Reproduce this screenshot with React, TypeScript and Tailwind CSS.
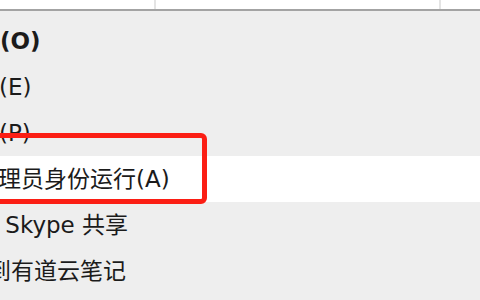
const rows = [
  { text: '打开(O)', offset: '-ml-[46px]', bold: true },
  { text: '编辑(E)', offset: '-ml-[47px]' },
  { text: '打印(P)', offset: '-ml-[47px]' },
  { text: '以管理员身份运行(A)', offset: '-ml-[48px]', active: true },
  { text: '通过 Skype 共享', offset: '-ml-[48px]' },
  { text: '上传到有道云笔记', offset: '-ml-[58px]' },
];

export default function App() {
  return (
    <div className="relative w-[480px] h-[300px] overflow-hidden bg-[#eeeeee] font-['DejaVu_Sans','Noto_Sans_CJK_SC',sans-serif] text-[#1b1b1b]">
      {/* explorer header strip */}
      <div className="flex h-[9px] bg-white">
        <div className="w-[156px] border-r-2 border-[#e4e4e4]" />
        <div className="w-[285px] border-r-2 border-[#e4e4e4]" />
      </div>
      <div className="h-[2px] bg-[#a3a3a3]" />

      {/* context menu */}
      <div className="pt-[7px]">
        {rows.map((row) => (
          <div
            key={row.text}
            className={`flex h-[46px] items-center overflow-hidden whitespace-nowrap ${row.active ? 'bg-white' : ''}`}
          >
            <span className={`${row.offset} text-[23px] leading-none ${row.bold ? 'font-bold' : ''}`}>
              {row.text}
            </span>
          </div>
        ))}
      </div>

      {/* red annotation box */}
      <div className="absolute left-[-10px] top-[133px] w-[217px] h-[71px] rounded-[6px] border-[5px] border-[#fb1e14]" />
    </div>
  );
}
